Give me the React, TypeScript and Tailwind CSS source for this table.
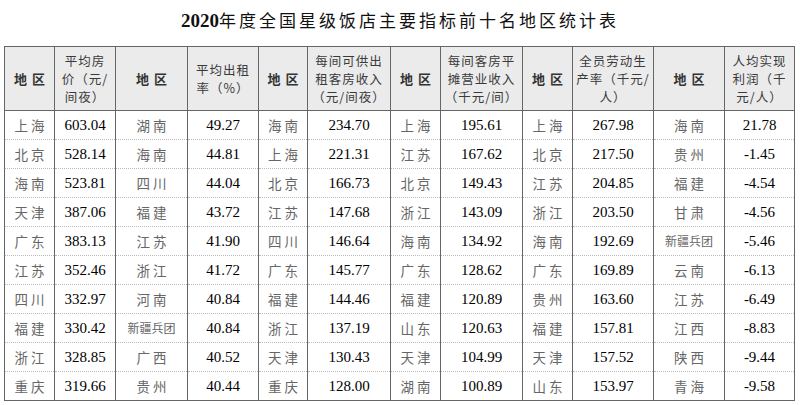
import React from "react";

const cjk = "font-['Noto_Sans_CJK_SC','Noto_Sans',sans-serif]";
const serif = "font-['Liberation_Serif','Noto_Sans_CJK_SC',serif]";

const columns = [
  {
    regions: ["上海", "北京", "海南", "天津", "广东", "江苏", "四川", "福建", "浙江", "重庆"],
    values: ["603.04", "528.14", "523.81", "387.06", "383.13", "352.46", "332.97", "330.42", "328.85", "319.66"],
  },
  {
    regions: ["湖南", "海南", "四川", "福建", "江苏", "浙江", "河南", "新疆兵团", "广西", "贵州"],
    values: ["49.27", "44.81", "44.04", "43.72", "41.90", "41.72", "40.84", "40.84", "40.52", "40.44"],
  },
  {
    regions: ["海南", "上海", "北京", "江苏", "四川", "广东", "福建", "浙江", "天津", "重庆"],
    values: ["234.70", "221.31", "166.73", "147.68", "146.64", "145.77", "144.46", "137.19", "130.43", "128.00"],
  },
  {
    regions: ["上海", "江苏", "北京", "浙江", "海南", "广东", "福建", "山东", "天津", "湖南"],
    values: ["195.61", "167.62", "149.43", "143.09", "134.92", "128.62", "120.89", "120.63", "104.99", "100.89"],
  },
  {
    regions: ["上海", "北京", "江苏", "浙江", "海南", "广东", "贵州", "福建", "天津", "山东"],
    values: ["267.98", "217.50", "204.85", "203.50", "192.69", "169.89", "163.60", "157.81", "157.52", "153.97"],
  },
  {
    regions: ["海南", "贵州", "福建", "甘肃", "新疆兵团", "云南", "江苏", "江西", "陕西", "青海"],
    values: ["21.78", "-1.45", "-4.54", "-4.56", "-5.46", "-6.13", "-6.49", "-8.83", "-9.44", "-9.58"],
  },
];

const headers = [
  ["平均房", "价（元/", "间夜）"],
  ["平均出租", "率（%）"],
  ["每间可供出", "租客房收入", "（元/间夜）"],
  ["每间客房平", "摊营业收入", "（千元/间）"],
  ["全员劳动生", "产率（千元/", "人）"],
  ["人均实现", "利润（千", "元/人）"],
];

const widths = [50, 61, 72, 71, 49, 83, 50, 82, 50, 81, 71, 70];

export default function App() {
  return (
    <div className="w-[800px] h-[405px] bg-white overflow-hidden">
      <h1 className="h-[46px] pt-[8px] text-center text-[#111] leading-[24px]">
        <span className={`${serif} font-bold text-[19px]`}>2020</span>
        <span className={`${cjk} text-[17px] tracking-[3px]`}>年度全国星级饭店主要指标前十名地区统计表</span>
      </h1>
      <table className="ml-[4px] w-[790px] table-fixed border-collapse">
        <colgroup>
          {widths.map((w, i) => (
            <col key={i} style={{ width: w }} />
          ))}
        </colgroup>
        <thead>
          <tr className="h-[64px] bg-[#ebebeb] border-y border-[#666]">
            {headers.map((lines, i) => (
              <React.Fragment key={i}>
                <th className={`${cjk} border-x border-[#666] text-[13px] font-semibold tracking-[5px] pl-[5px] text-[#333]`}>地区</th>
                <th className={`${cjk} border-x border-[#666] text-[12.5px] font-normal leading-[18px] tracking-[1px] text-[#3a3a3a]`}>
                  {lines.map((l) => (
                    <div key={l}>{l}</div>
                  ))}
                </th>
              </React.Fragment>
            ))}
          </tr>
        </thead>
        <tbody>
          {Array.from({ length: 10 }).map((_, r) => (
            <tr key={r} className="h-[29px] border-b border-dotted border-[#bbb] last:border-solid last:border-[#666]">
              {columns.map((c, i) => (
                <React.Fragment key={i}>
                  <td
                    className={`${cjk} border-x border-[#666] text-center text-[#666] ${
                      c.regions[r].length === 2 ? "text-[13.5px] tracking-[3px] pl-[3px]" : "text-[12px]"
                    }`}
                  >
                    {c.regions[r]}
                  </td>
                  <td className={`${serif} border-x border-[#666] text-center text-[15px] text-black`}>
                    {c.values[r]}
                  </td>
                </React.Fragment>
              ))}
            </tr>
          ))}
        </tbody>
      </table>
    </div>
  );
}
